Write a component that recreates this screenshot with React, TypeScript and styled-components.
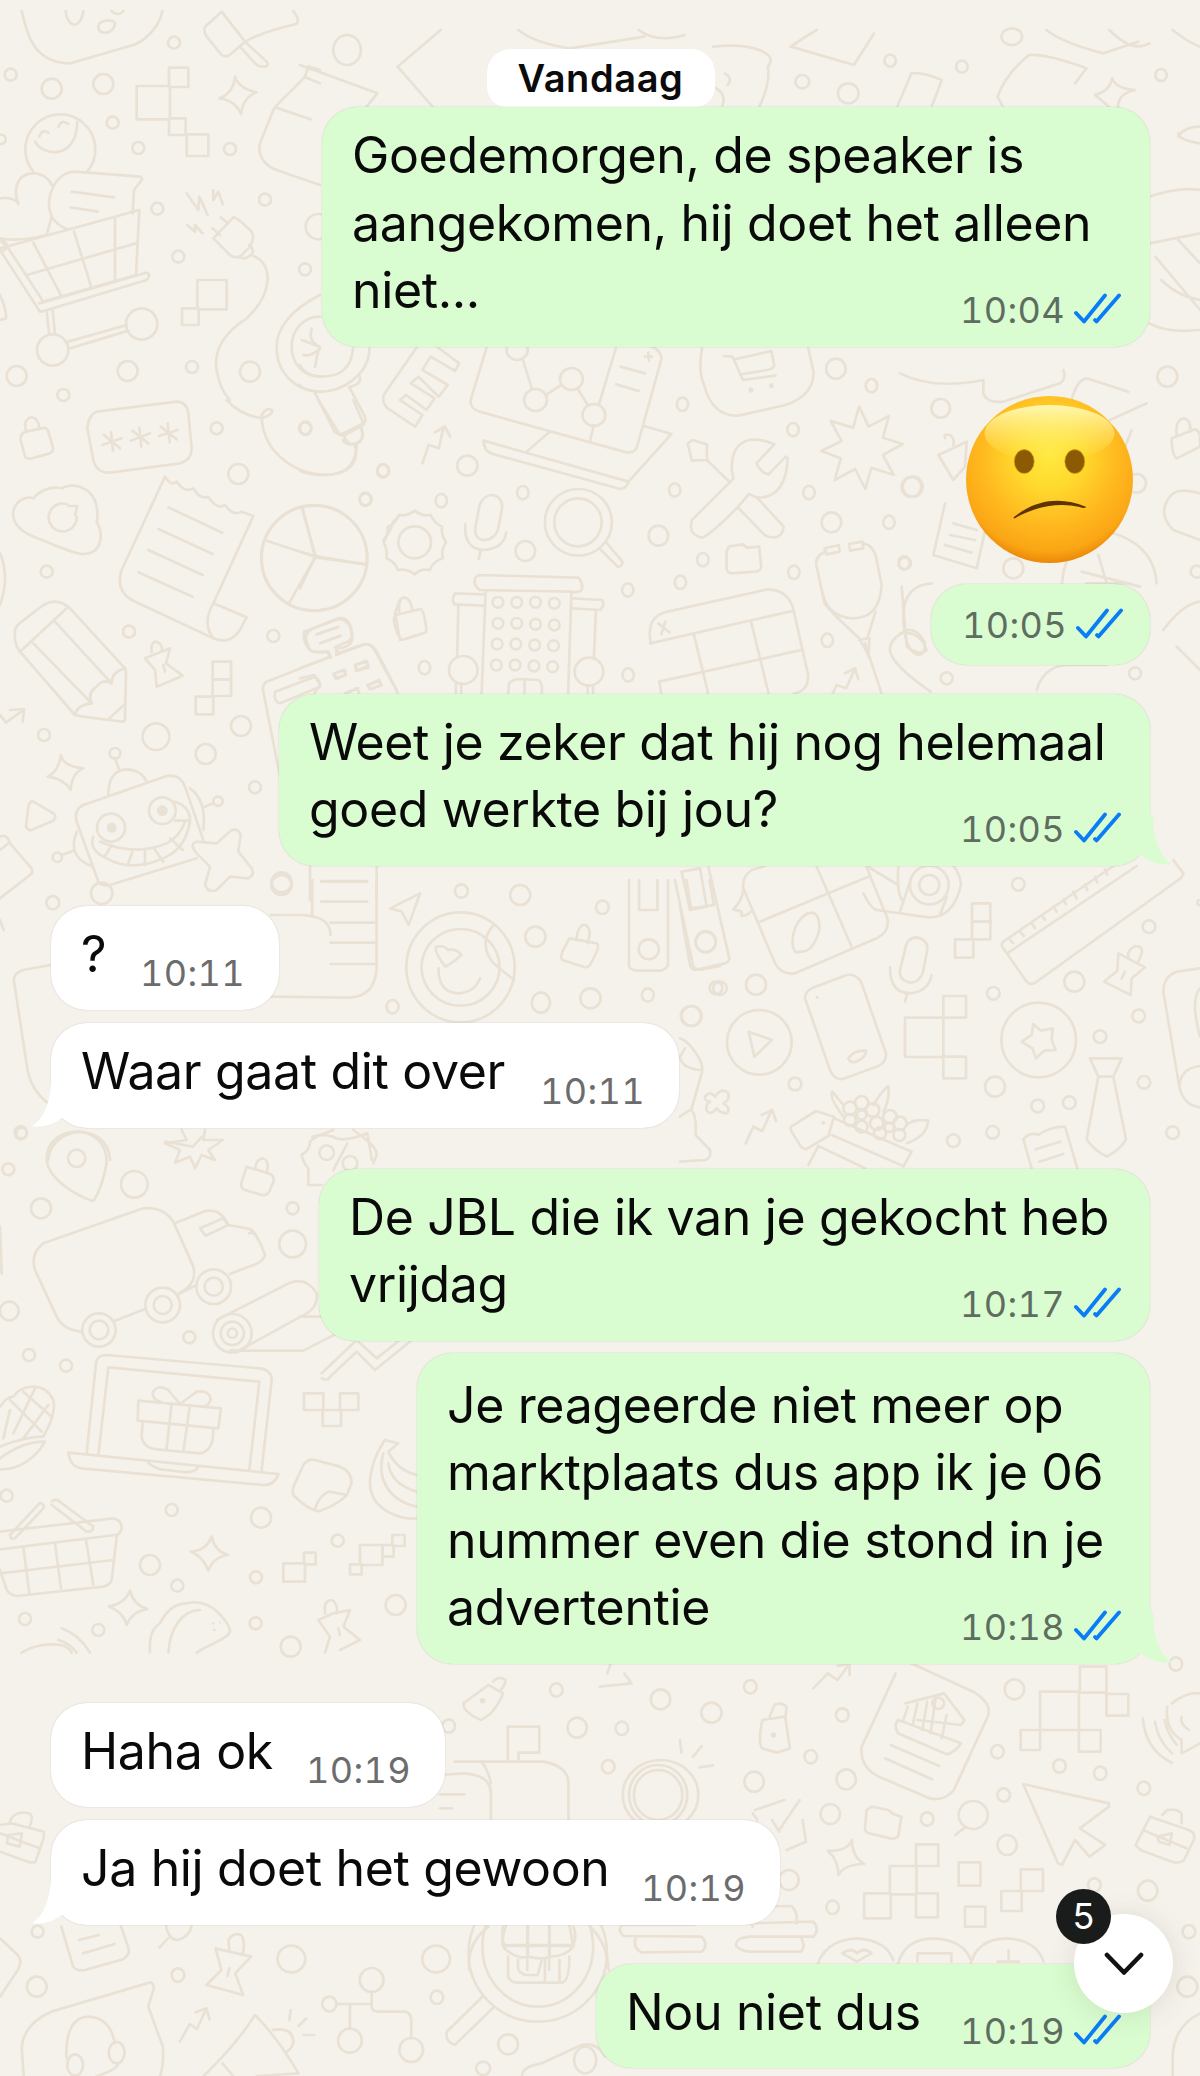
import React from "react";
import styled, { createGlobalStyle } from "styled-components";

const Global = createGlobalStyle`
  html, body { margin: 0; padding: 0; background: #f6f4ef; }
  * { box-sizing: border-box; }
`;

const Page = styled.div`
  position: relative;
  width: 1200px;
  height: 2076px;
  overflow: hidden;
  background: #f5f2ec;
  font-family: Inter, "Liberation Sans", sans-serif;
`;

const Wallpaper = styled.svg`
  position: absolute;
  inset: 0;
  width: 1200px;
  height: 2076px;
  clip-path: inset(10px 0 0 0);
`;

const Chat = styled.main`
  position: relative;
  display: flex;
  flex-direction: column;
  padding: 49px 50px 0 51px;
`;

const DateRow = styled.div`
  display: flex;
  justify-content: center;
`;

const DatePill = styled.div`
  height: 58px;
  width: 228px;
  display: flex;
  align-items: center;
  justify-content: center;
  background: #fff;
  border-radius: 24px 24px 20px 20px;
  font-size: 38px;
  font-weight: 600;
  letter-spacing: 0.6px;
  color: #0b0b0b;
`;

const Row = styled.div<{ $out: boolean; $gap: number }>`
  display: flex;
  justify-content: ${(p) => (p.$out ? "flex-end" : "flex-start")};
  margin-top: ${(p) => p.$gap}px;
`;

const Bubble = styled.div<{ $out: boolean; $w: number; $compact?: boolean; $top?: number }>`
  position: relative;
  width: ${(p) => p.$w}px;
  display: grid;
  padding: ${(p) => (p.$compact ? "0 28px 0" : `${p.$top ?? 15}px 30px 22px`)};
  height: ${(p) => (p.$compact ? "81px" : "auto")};
  align-items: ${(p) => (p.$compact ? "center" : "stretch")};
  border-radius: 36px;
  background: ${(p) => (p.$out ? "#d9fdd0" : "#ffffff")};
  box-shadow: 0 0 1.5px rgba(90, 70, 50, 0.28);
`;

const MsgText = styled.div`
  grid-area: 1 / 1;
  justify-self: start;
  font-size: 50px;
  line-height: 67.5px;
  color: #0a0a0a;
  letter-spacing: -0.35px;
`;

const MsgLine = styled.span`
  display: block;
  width: fit-content;
  white-space: nowrap;
`;

const Meta = styled.div<{ $out: boolean; $compact?: boolean }>`
  grid-area: 1 / 1;
  justify-self: end;
  align-self: ${(p) => (p.$compact ? "center" : "end")};
  display: flex;
  align-items: flex-end;
  gap: 9px;
  margin-right: ${(p) => (p.$out ? "-1px" : "4px")};
  margin-bottom: ${(p) => (p.$compact ? "-1px" : "-3px")};
  font-size: 36px;
  line-height: 36px;
  font-variant-numeric: tabular-nums;
  letter-spacing: 0.4px;
  color: ${(p) => (p.$out ? "#5f6d60" : "#6c6c6c")};
`;

const Ticks = styled.svg`
  width: 47px;
  height: 31px;
  margin-bottom: 4px;
  flex: none;
`;

const Tail = styled.svg<{ $out: boolean }>`
  position: absolute;
  bottom: 0;
  width: 60px;
  height: 60px;
  ${(p) => (p.$out ? "right: -23px;" : "left: -20px;")}
  ${(p) => (p.$out ? "" : "transform: scaleX(-1);")}
  fill: ${(p) => (p.$out ? "#d9fdd0" : "#ffffff")};
`;

const Emoji = styled.svg`
  width: 167px;
  height: 167px;
  margin-right: 17px;
`;

const ScrollButton = styled.div`
  position: absolute;
  left: 1074px;
  top: 1914px;
  width: 99px;
  height: 99px;
  border-radius: 50%;
  background: #fff;
  box-shadow: 0 2px 28px rgba(90, 80, 60, 0.14);
  display: flex;
  align-items: center;
  justify-content: center;
`;

const Chevron = styled.svg`
  width: 40px;
  height: 24px;
`;

const Badge = styled.div`
  position: absolute;
  left: -18px;
  top: -25px;
  width: 55px;
  height: 55px;
  border-radius: 50%;
  background: #191c1a;
  color: #fff;
  font-size: 36px;
  line-height: 55px;
  text-align: center;
`;

type E = [number, number, number, number?];
type R = [number, number, number, number];
interface Group {
  x: number;
  y: number;
  sx: number;
  sy: number;
  p: string[];
  c?: E[];
  r?: R[];
  f?: E[];
}

const art: Group[] = [
  {
    x: 0, y: 0, sx: 3, sy: 3,
    p: [
      "M65 33C80 100 100 190 210 190L400 135C450 115 480 70 487 33",
      "M197 33C200 80 240 95 250 33", "M295 80C295 60 340 55 345 70C345 100 295 110 295 80", "M335 33C345 45 360 45 370 33",
      "M665 35L615 80Q610 95 620 110L665 165Q680 175 695 160L735 125L665 35", "M735 125L800 185Q810 200 790 200Q775 200 765 190L720 140", "M735 125C780 100 830 85 890 72Q900 60 880 33",
      "M705 230Q715 265 770 277Q730 290 723 342Q705 300 658 295Q700 280 705 230",
      "M925 200L915 230C880 270 830 310 820 330L780 430C770 470 800 500 830 510L960 555", "M925 200L960 210", "M915 232L960 250", "M825 322L932 358",
      "M100 515A105 105 0 1 1 262 515", "M105 425C130 470 230 480 232 365", "M118 410Q125 385 145 398", "M175 382Q185 355 205 372",
      "M0 595C25 590 50 600 55 612C35 555 60 520 100 520C130 520 150 540 155 555", "M0 715C50 725 100 715 140 705",
      "M140 705L155 650C130 590 170 515 225 515L420 530Q430 535 425 540L402 570L398 640", "M215 575L342 592", "M212 622L293 635", "M155 650Q175 680 205 688",
      "M0 745L418 630L408 825", "M100 728L185 890", "M222 695L275 865", "M345 655L345 845", "M80 825L408 730", "M0 720L25 745L130 905L408 825", "M125 935L440 840Q455 825 440 818L118 910", "M0 750L120 935", "M140 935L148 1005", "M158 930L165 1005", "M205 1025L380 975", "M210 1045L385 992",
      "M560 580L595 630L598 590L623 645", "M640 570L640 600L655 575L668 612", "M562 675L585 695L585 675L608 700",
      "M640 715L700 652Q710 650 755 695Q765 715 750 740L720 770Q700 775 690 765L640 715", "M748 735Q775 760 735 775Q720 775 715 770", "M637 685L660 705", "M662 652L685 670",
      "M760 768C820 790 820 880 740 955C670 1000 640 1050 650 1110Q660 1170 690 1200",
      "M960 885C880 925 830 980 830 1040C830 1130 900 1175 960 1175", "M960 950C910 950 875 990 875 1040C875 1090 910 1130 960 1130", "M905 1020L960 1040", "M935 985Q925 1020 950 1035", "M910 1065Q935 1070 960 1045", "M945 1100L955 1050",
      "M0 885Q20 930 18 955L0 960",
    ],
    c: [[522,128,18],[32,224,18],[155,266,30],[310,252,30],[338,368,18],[415,444,18],[690,447,18],[795,599,18],[472,626,18],[535,770,18],[915,808,18],[955,680,38],[3,418,14],[50,1128,30],[383,1113,30],[576,1101,18],[750,1115,30],[190,1185,18],[158,1050,47],[425,972,47],[5,737,15]],
    r: [[507,203,58,58],[410,258,100,100],[507,355,50,50],[560,403,65,65],[592,840,88,88],[546,925,50,50]],
  },
  {
    x: 300, y: 30, sx: 1.742, sy: 3,
    p: [
      "M0 105L135 190L115 232", "M170 110L245 0", "M170 110L232 232", "M380 0Q410 40 470 55L600 20", "M590 0Q620 40 670 15",
      "M720 50Q770 40 800 60Q830 80 815 110Q820 160 800 230", "M740 130Q755 145 745 165", "M735 232Q745 190 720 170",
      "M855 50L965 105L1000 10", "M855 50Q880 20 900 0", "M1040 232L1065 130Q1085 125 1118 150L1100 232", "M1215 200Q1230 130 1270 75Q1300 70 1370 115L1350 160", "M1215 200L1225 232",
      "M1300 0Q1330 40 1400 70L1460 35", "M1410 0Q1450 70 1480 40", "M1415 145Q1420 175 1455 180Q1425 190 1425 232", "M1385 195Q1410 185 1415 145", "M1385 195Q1400 215 1410 232", "M1520 0Q1550 40 1568 50",
      "M1530 320Q1540 290 1568 290", "M1568 340Q1530 330 1530 310", "M1480 500Q1530 470 1568 480", "M1480 640L1568 610", "M1490 680L1568 840", "M1530 630L1568 700", "M1500 750Q1530 800 1568 810", "M1480 880Q1510 910 1568 900",
    ],
    c: [[82,60,24,45],[875,155,12,20],[955,190,18,30],[1028,92,10,18],[1153,110,10,18],[1500,135,10,18],[1240,20,18,25]],
  },
  {
    x: 0, y: 400, sx: 3, sy: 3,
    p: [
      "M78 95Q60 100 62 120L75 170Q80 178 95 175L150 160Q162 155 158 140L145 95Q140 80 125 85Z", "M78 95L75 70Q85 45 105 55Q118 65 118 88",
      "M290 35L530 5Q560 5 565 40L575 145Q575 180 540 190L330 218Q290 220 280 180L262 85Q265 45 290 35Z",
      "M333 97L339 153M307 135L365 115M312 105L360 145", "M418 83L424 140M392 122L450 100M397 92L445 130", "M503 70L509 127M477 108L533 90M482 80L530 118",
      "M680 0Q720 45 785 55Q825 40 815 30Q800 20 785 45Q785 120 840 170Q900 225 985 225Q1070 220 1070 130", "M955 0L1020 105L1090 70L1060 0", "M1030 100Q1040 140 1070 130Q1095 120 1085 85",
      "M100 295C130 260 170 260 185 265C215 245 280 260 290 320Q295 350 290 365C310 400 310 460 250 462Q230 465 90 405C20 370 30 310 75 295Q90 290 100 295Z", "M230 350A42 42 0 1 1 200 312", "M205 318L232 318L225 345",
      "M495 230L365 510Q345 570 395 600L640 715Q700 740 730 670L740 652L640 610Q605 670 640 715", "M495 230Q515 260 530 245Q555 280 580 265Q600 300 625 290Q650 330 675 315Q700 350 725 335L760 348L640 610", "M505 322L667 398", "M475 387L638 462", "M445 450L608 525", "M415 517L578 590",
      "M945 470L908 325", "M945 470L800 422", "M945 472L1098 493", "M945 472L870 605",
      "M45 690Q40 730 60 755L225 945Q240 950 370 965Q378 960 375 950L378 815L375 805L210 625Q170 590 130 615L65 665Q50 675 45 690", "M60 755L200 625", "M100 730L270 905", "M165 665L335 850", "M225 945Q230 915 275 910Q260 880 290 860Q310 835 335 850Q335 815 375 805", "M325 958L375 912",
      "M435 775L510 745L498 790L548 827L470 860L465 810Z", "M455 757Q450 725 470 725Q490 735 485 755", "M490 795L495 815",
      "M0 945L18 968L70 930", "M30 930L72 927L68 965",
      "M183 1065Q190 1100 250 1105Q215 1120 212 1170Q190 1135 143 1130Q175 1115 183 1065",
      "M100 1205Q90 1200 85 1220L78 1280Q85 1295 100 1288L160 1262Q172 1250 160 1240Z",
      "M250 1215L500 1128Q540 1120 555 1160L610 1320", "M250 1215Q220 1230 230 1265L295 1445Q305 1460 330 1455L590 1375", "M325 1185Q325 1110 380 1108Q425 1110 440 1145", "M345 1075L358 1110",
      "M280 1310Q265 1350 320 1375Q400 1420 500 1370Q560 1340 570 1260Q570 1220 525 1205", "M300 1325Q410 1370 500 1330Q540 1310 555 1265", "M335 1335L315 1368", "M397 1355L383 1395", "M435 1355L435 1395", "M462 1345L490 1385", "M510 1315L548 1350", "M525 1262L568 1262",
      "M230 1295Q200 1370 275 1398", "M185 1365L220 1352", "M570 1165Q620 1200 610 1290", "M610 1222L640 1210",
      "M580 1330Q575 1345 590 1360L630 1400L615 1455Q625 1480 650 1470L690 1430L745 1435Q765 1425 755 1405L715 1355L722 1305Q715 1285 695 1290L650 1330L590 1325Z",
      "M990 770L800 845Q785 855 790 875L840 1130", "M1015 655L940 685Q910 700 920 725L930 750Q940 760 980 755L993 772", "M1008 745L1010 765", "M1015 655Q1040 650 1050 675L1058 705Q1055 725 1030 730L1005 742", "M950 703L1015 680", "M960 730L1022 708", "M1008 765L1095 733Q1115 730 1130 755L1190 870",
      "M825 875L945 830Q958 835 960 860L840 910Q820 905 825 875", "M1000 822L1030 810L1038 825L1008 837Z", "M1065 795L1098 783L1105 797L1072 810Z", "M1105 855L1138 840L1145 855L1112 868Z", "M1040 880L1075 865",
      "M0 1310Q20 1300 30 1330L95 1405Q100 1420 90 1425L0 1495", "M0 1350L25 1330",
      "M930 1400L930 1500", "M1130 1400L1130 1500", "M965 1443L1100 1443", "M0 460Q30 530 0 615",
      "M1150 420Q1170 400 1180 365L1200 345", "M1200 600L1185 640L1200 720",
    ],
    c: [[650,85,18],[915,85,18],[715,222,30],[1150,212,18],[1097,298,18],[140,515,18],[387,695,18],[820,708,18],[132,1005,18],[468,1010,40],[723,978,30],[617,1062,30],[765,1162,18],[845,1447,30],[943,473,158],[345,1060,16],[333,1283,42],[487,1232,40],[172,1372,14],[654,1204,14],[305,1480,32]],
    f: [[335,1283,15],[487,1232,16]],
    r: [[638,785,55,53],[638,838,55,50],[587,890,53,53]],
  },
  {
    x: 300, y: 345, sx: 2.45, sy: 3,
    p: [
      "M170 10C170 90 100 145 40 140Q0 130 0 120", "M130 10C125 80 90 95 50 95Q10 90 0 60", "M35 140L85 260Q100 275 110 270L155 240Q165 225 155 205L120 125", "M105 285Q115 305 140 295Q160 280 150 250", "M135 300Q150 385 60 390Q20 390 0 378", "M125 125Q155 115 145 90",
      "M290 0L205 150Q200 175 215 190L282 245L300 210L245 165L260 150L310 195L330 160L272 115L290 95L340 155L362 120L300 75L320 35L380 78L390 55L330 0",
      "M300 355L315 300L340 310L352 245", "M330 262L355 245L368 275",
      "M458 5L418 165Q415 190 440 200L800 322Q825 325 828 295L886 40Q880 10 860 5", "M450 287L805 410L910 267L843 243", "M450 287Q450 320 475 328L785 432Q800 430 805 410", "M555 320L612 260", "M710 290L720 240",
      "M545 40L568 130", "M602 150L640 120", "M682 135L705 180", "M732 180L775 5", "M785 65L845 85", "M775 118L830 138", "M845 35L862 35M853 22L855 48",
      "M985 10Q975 80 990 120Q1010 215 1075 212L1190 180Q1260 150 1258 80L1245 8", "M1038 33L1060 35L1085 105L1165 92", "M1068 42L1155 18L1162 60Q1160 72 1145 75L1078 88",
      "M38 633L5 490", "M38 633L0 620", "M38 633L160 658", "M38 635L0 730",
      "M281 497Q300 515 320 510Q330 535 348 545Q345 570 358 592Q345 615 350 640Q325 650 318 675Q295 670 281 688Q262 670 240 675Q232 650 212 640Q215 615 205 592Q215 570 215 545Q235 535 242 510Q262 515 281 497Z",
      "M430 545L440 480Q450 450 470 450Q498 455 495 490L485 555Q475 585 450 585Q425 580 430 545Z", "M405 537Q400 610 450 615Q500 610 505 562", "M443 615L438 642",
      "M735 612L778 665Q790 665 790 650L750 592",
      "M950 295L962 285L997 298L997 345L960 347Z", "M997 345L1053 412", "M1053 412L960 525Q950 570 985 578Q1000 575 1070 490", "M1075 490L1140 572Q1180 590 1185 545L1120 458Q1190 460 1195 340L1190 335L1148 388Q1130 385 1118 355L1162 298Q1130 280 1100 285Q1055 300 1058 375L1062 400L1053 412", "M1070 490L1100 447L1120 458",
      "M1045 620L1050 605L1085 598L1095 608L1125 605L1130 668Q1125 680 1115 680L1055 685Q1045 680 1045 670Z",
      "M1370 185L1393 245L1443 213L1428 278L1477 297L1428 330L1455 390L1400 368L1385 432L1360 372L1310 405L1325 340L1277 318L1327 288L1300 228L1355 248Z",
      "M1290 620Q1262 630 1265 660L1285 775Q1300 800 1370 880L1395 935L1425 1045", "M1380 595Q1405 600 1412 640L1425 720Q1420 820 1355 820Q1290 815 1280 740", "M1285 610L1320 600L1322 620L1290 628Z", "M1345 597L1378 590L1380 610L1348 617Z", "M1410 800L1390 880L1370 885", "M1385 895L1393 935L1395 880",
      "M1548 715Q1480 720 1478 810Q1480 920 1515 930Q1535 925 1530 890Q1510 850 1488 855Q1445 880 1445 915Q1450 960 1545 1040",
      "M440 690L682 698Q695 715 690 735Q680 745 665 740L440 735Q425 720 428 705Q430 692 440 690", "M455 735L445 1045", "M665 740L657 1045", "M450 748L380 745Q370 760 378 778L450 782", "M668 760L740 765Q748 780 735 795L668 790", "M388 780L385 935", "M725 795L720 940", "M382 1015L382 1045M395 1015L395 1045", "M705 1020L705 1045M718 1020L718 1045", "M510 1045L512 1015Q520 1002 540 1002L585 1005Q595 1015 592 1045", "M550 1002L550 1045",
      "M235 810L295 792Q305 795 310 860Q305 865 250 885Q240 880 230 830Q230 815 235 810", "M243 800Q240 760 255 757Q272 760 275 795",
      "M10 860L95 822Q120 825 125 855L128 885Q120 910 90 910L92 925L155 898Q175 895 185 920L240 1045", "M10 860Q5 880 20 910Q30 925 70 920L75 935L0 970", "M42 868L90 848", "M50 895L98 872", "M85 985L110 975L112 990L88 1000Z", "M135 960L165 950L167 968L138 978Z", "M165 1020L195 1008L197 1022L170 1032Z", "M0 1000L35 990L50 1020L35 1045", "M110 1045L140 1030L145 1045",
      "M860 895Q845 815 900 800L1145 733Q1200 735 1210 800L1245 990Q1245 1040 1210 1045", "M858 895L1210 797", "M965 868L1000 1045", "M1105 830L1148 1045", "M880 1010L1228 915", "M885 1045L880 1010", "M878 835L905 862M895 830L885 868",
      "M1305 1045L1315 1020L1338 1030L1360 970", "M1335 985L1360 970L1368 1003",
    ],
    c: [[14,250,14,20],[203,378,14,20],[410,362,25,30],[937,178,14,20],[1208,254,14,20],[1313,71,24,30],[1400,122,14,20],[546,443,14,20],[160,463,14,20],[346,467,14,20],[918,435,14,20],[1247,443,14,20],[1498,426,24,30],[1302,532,24,30],[1443,532,14,20],[878,572,24,30],[552,618,24,30],[987,644,14,20],[1210,682,14,20],[1480,654,14,20],[803,735,14,20],[932,712,14,20],[1292,886,14,20],[305,968,14,20],[804,990,14,20],
      [532,15,26,30],[577,165,28,33],[665,102,28,33],[720,210,28,33],[35,640,130,158],[281,592,40,48],[682,532,82,100],[681,532,58,72],[400,975,35,42],[708,980,35,42],
      [485,772,13,16],[531,772,13,16],[577,772,13,16],[623,775,13,16],[485,835,13,16],[531,835,13,16],[577,838,13,16],[623,840,13,16],[483,897,13,16],[529,897,13,16],[575,900,13,16],[621,902,13,16],[481,960,13,16],[527,960,13,16],[573,963,13,16],[619,965,13,16]],
    f: [[1105,135,6,8],[1155,122,6,8]],
  },
  {
    x: 900, y: 370, sx: 3, sy: 3,
    p: [
      "M0 10Q100 60 250 30L250 70Q260 100 310 95L480 40Q500 25 490 0", "M515 90Q530 30 560 25L685 65", "M630 150L740 100", "M660 270L695 180",
      "M815 205L885 178Q900 185 900 200L900 230L830 265Q815 255 815 205", "M830 195Q825 145 855 145Q875 155 870 185",
      "M115 255L200 215L195 290L160 330Z", "M135 205Q130 190 150 195Q165 205 160 225",
      "M135 400L100 555L230 595L260 460", "M160 460L230 480", "M150 495L225 510", "M135 525L215 548",
      "M485 680Q480 520 600 480Q760 510 770 640", "M595 555L620 640", "M560 640L690 640", "M545 605L720 650",
      "M900 510L820 480Q770 430 810 380Q830 350 900 370", "M0 790Q60 780 80 840Q60 860 20 830L5 650", "M790 780Q850 700 900 695", "M830 830L900 900", "M410 960Q430 890 500 885L620 885",
    ],
    c: [[122,115,28],[802,20,30],[38,350,30],[15,580,18],[340,595,30],[140,925,18],[705,910,18],[890,605,18],[710,340,28]],
  },
  {
    x: 0, y: 880, sx: 2.178, sy: 3,
    p: [
      "M680 0L680 110", "M820 0L820 270Q815 350 760 353L590 350", "M700 5L800 5", "M700 65L800 65", "M720 128L820 128", "M720 188L820 188", "M720 252L820 252", "M590 105L660 105Q720 110 720 165",
      "M850 85L915 40L890 135L875 95Z",
      "M1075 135Q1040 190 1075 250Q1100 280 1120 300", "M970 260Q945 215 950 200Q970 195 975 210Q995 205 1005 225Q985 250 970 260", "M955 265Q955 340 1000 340Q1035 335 1045 295",
      "M1240 175L1300 190Q1305 195 1300 215L1285 255Q1280 265 1270 260L1225 240Q1220 235 1225 215Z", "M1255 180Q1260 130 1275 135Q1290 145 1280 190",
      "M1370 0L1370 260Q1375 272 1390 272L1440 272Q1455 265 1455 250L1455 0", "M1392 0L1392 90L1432 90L1432 0", "M1470 0L1510 260Q1520 275 1540 265L1568 258", "M1495 0L1505 85L1555 75L1545 0",
      "M110 255L50 270Q30 280 30 300L60 570Q70 640 115 680", "M105 840Q110 770 170 755Q235 760 240 840", "M360 785L420 800L440 770", "M680 770Q700 760 725 770Q745 790 800 760L810 840",
      "M0 120L8 150",
    ],
    c: [[115,68,14,20],[1005,33,14,20],[1133,45,22,30],[1312,82,14,20],[1166,170,22,30],[1178,368,20,30],[1286,355,22,30],[1411,345,13,20],[1505,408,22,30],[855,380,13,20],[613,15,22,30],[45,758,13,20],[1003,262,118,165],[1003,262,85,115],[1413,208,22,30],[1537,185,22,32],[1568,325,15,20]],
  },
  {
    x: 680, y: 860, sx: 3, sy: 3,
    p: [
      "M5 35L60 25L80 140L30 150Z", "M85 20L148 295Q148 305 135 310L45 330Q35 328 30 315L0 140",
      "M255 18L215 30Q185 50 190 85L285 310Q305 345 345 340L590 235Q630 215 622 175L560 22", "M240 185L565 50", "M410 20L515 260", "M345 275Q330 250 345 205Q365 160 395 158Q420 160 418 210Q400 275 365 275Q350 278 345 275", "M190 90Q185 125 160 148L185 155L185 168Q205 165 212 155",
      "M560 18L655 75", "M655 20Q650 90 665 120", "M695 50L660 155", "M550 100Q575 148 590 150L745 172Q820 175 843 75Q840 40 820 18", "M800 110L780 165",
      "M970 245L1300 18", "M1480 0L1510 40Q1510 50 1495 60L1070 365Q1055 378 1040 365L970 265Q960 250 970 245", "M985 278L1370 18", "M990 240L1000 250", "M1020 215L1032 228", "M1055 190L1065 205", "M1085 165L1095 180", "M1120 140L1130 155", "M1150 118L1158 133", "M1180 95L1190 115", "M1215 73L1222 90", "M1245 50L1252 68", "M1275 28L1282 45",
      "M675 270Q680 232 710 232Q745 240 742 270L728 340Q715 370 690 368Q655 360 660 330Z", "M630 322Q630 400 690 400Q745 395 755 345", "M682 398L675 425",
      "M375 415Q375 395 395 385L500 345Q530 340 545 370L618 580Q620 605 595 618L495 655Q465 665 450 630Z", "M505 595Q520 570 558 572Q560 590 530 605Q510 610 505 595",
      "M206 515L276 540L223 590Z",
      "M1345 292Q1340 270 1365 258Q1390 258 1385 280L1375 305", "M1315 280L1395 322L1355 355L1352 405L1272 365L1312 332Z", "M1335 335L1325 355",
      "M1060 492L1083 512L1118 505L1115 540L1127 570L1092 572L1068 595L1057 565L1025 545L1055 525Z",
      "M1230 595L1325 595L1300 650L1255 650Z", "M1255 650L1220 838Q1240 870 1280 890Q1320 870 1338 838L1300 650",
      "M197 850L220 800L247 813L275 750", "M245 765L277 750L288 783",
      "M75 710Q90 690 105 710Q125 680 145 700Q150 720 130 730Q155 745 140 760Q120 760 110 745Q90 770 80 750Q75 735 90 725Q70 720 75 710",
      "M333 800L408 753L462 770L445 828L378 868Q365 865 360 855L335 815Q330 805 333 800", "M462 775L695 875L670 920", "M455 825L670 918", "M415 858L385 915", "M415 858L555 925", "M490 770Q445 710 457 695L490 735", "M580 735Q600 700 625 678Q630 720 610 755", "M680 850Q740 830 745 782Q700 775 680 795",
      "M1030 838Q1050 815 1075 825Q1110 800 1155 800L1192 925", "M1030 838L1055 925", "M1067 868L1140 845", "M1078 905L1150 882",
      "M1560 325L1490 335Q1450 350 1450 395L1498 680Q1510 735 1560 742", "M1560 618Q1500 625 1498 680", "M1560 385Q1530 420 1560 530",
      "M0 770L30 750Q50 755 47 825L90 870Q95 895 75 900L0 905", "M0 535Q30 545 60 600Q70 620 65 640L35 745", "M15 565L0 590Q5 625 60 630",
    ],
    c: [[77,246,30],[748,75,58],[748,75,30],[238,547,97],[1076,540,112],[108,384,19],[228,374,30],[35,468,30],[345,672,19],[1015,73,19],[1407,200,19],[940,400,19],[1183,365,30],[1376,468,19],[1260,530,19],[945,680,30],[1073,738,19],[1168,728,19],[938,817,19],[820,842,19],[1392,667,19],[1478,818,19],[1560,128,8],
      [510,745,20],[545,728,20],[578,750,20],[630,770,20],[660,790,20],[510,780,18],[545,765,14],[590,790,20],[628,802,14],[658,825,18],[600,820,18],[545,800,18]],
    f: [[412,412,5],[430,788,6]],
    r: [[876,130,55,55],[876,185,55,53],[825,238,55,55],[790,408,68,65],[675,473,115,118],[790,590,68,65]],
  },
  {
    x: 0, y: 1130, sx: 3, sy: 3,
    p: [
      "M275 212C240 200 140 150 140 85C140 30 190 5 230 5C280 5 320 40 320 95C315 140 295 190 285 205Q280 215 275 212Z",
      "M495 40L560 30L545 0", "M615 0L610 30L668 30L625 60L645 90L605 75L585 115L570 80L525 98L540 60L495 40",
      "M740 110L805 130Q825 135 820 155L808 185Q800 198 785 195L735 180Q720 175 725 155Z", "M765 115Q770 85 790 85Q810 95 800 125",
      "M905 75Q930 60 930 35Q945 20 975 10L1000 0", "M1060 0Q1090 20 1110 40Q1130 55 1130 75L1120 100", "M905 75Q910 100 925 115L925 165L965 165", "M1042 40L1000 120",
      "M130 340L430 235Q490 230 520 275L580 410Q590 450 560 475L535 492", "M130 340Q90 370 105 420L170 560Q190 600 245 605", "M345 572L435 537", "M535 492L590 465",
      "M525 280L610 245Q660 230 685 285L750 297Q770 305 795 375Q790 395 760 405L690 432", "M600 295L670 265L685 285L617 317Z", "M748 310Q760 300 775 330",
      "M650 570L870 458Q920 440 950 490Q955 530 920 550L720 660", "M690 662L910 662L1060 585", "M900 560L970 560",
      "M965 730L1070 630L1130 685L1250 590", "M965 745Q985 755 990 740L1070 665L1125 720L1260 610",
      "M260 970L288 700Q290 675 320 675L780 715Q815 720 815 750L785 1020", "M295 975L325 712L778 755L748 1020", "M205 968L835 1032Q825 1065 790 1065L245 1015Q210 1010 205 968", "M445 998Q470 1020 500 1020L560 1027Q590 1025 595 1010",
      "M415 812L663 835L655 895L413 872Z", "M428 875L425 920Q430 955 470 958L600 970Q630 965 638 930L640 895", "M515 820L500 955", "M570 825L550 965", "M540 822L505 780Q470 760 458 790Q460 810 480 815", "M540 822L590 785Q630 780 632 810Q625 825 615 828",
      "M0 1018C60 1020 110 980 135 935C90 935 40 955 0 985", "M0 950C50 930 100 920 130 920Q170 850 160 810Q140 770 100 770Q60 770 40 800Q20 800 0 830", "M30 810L125 905", "M70 785L155 860", "M105 775L40 910", "M145 825L70 925", "M30 840L10 925",
      "M0 1205L340 1165Q365 1170 365 1195Q360 1215 345 1215L0 1258", "M350 1220L335 1350Q330 1365 310 1370L50 1398Q30 1395 20 1380L0 1320", "M70 1250L88 1390", "M165 1240L183 1375", "M258 1230L280 1365", "M0 1330L340 1290", "M30 1215L120 1118Q135 1125 130 1135L45 1225Q30 1230 30 1215", "M155 1115Q165 1105 175 1112L280 1190Q280 1205 260 1205L155 1125",
      "M635 1220Q645 1265 685 1275Q640 1280 625 1322Q610 1280 573 1265Q620 1260 635 1220", "M390 1382Q400 1425 442 1437Q395 1445 380 1485Q370 1445 327 1430Q375 1420 390 1382",
      "M945 990L1020 1010Q1055 1025 1055 1060L1040 1095Q1020 1120 960 1143Q930 1145 880 1095Q875 1080 885 1060L910 1005Q925 985 945 990", "M945 1138Q955 1100 985 1085Q1020 1090 1040 1095",
      "M1155 930L1195 940L1165 965", "M1155 930C1120 980 1100 1050 1115 1090C1130 1140 1200 1170 1250 1165", "M1150 970C1130 1040 1160 1110 1250 1130", "M1165 1000C1170 1040 1200 1070 1250 1085", "M1165 965Q1190 1020 1250 1035",
      "M450 1568Q445 1500 480 1480Q510 1420 560 1420Q600 1410 640 1435Q690 1480 690 1505C680 1530 620 1545 590 1568", "M505 1568C510 1490 550 1440 600 1440",
      "M955 1470L1000 1450L1050 1440L1030 1490L1080 1530L1020 1560", "M955 1470L990 1520L975 1568", "M975 1450Q970 1410 995 1410Q1015 1420 1010 1450", "M1015 1495L1020 1515",
      "M185 1495C240 1515 265 1560 270 1568", "M65 1568C110 1540 200 1530 215 1568", "M175 1530Q210 1540 230 1568", "M0 290L5 430",
    ],
    c: [[25,118,18],[123,235,30],[403,163,40],[878,235,18],[878,342,40],[28,543,28],[568,622,18],[87,675,18],[198,707,18],[515,1140,18],[783,1163,30],[20,1097,18],[450,1305,30],[768,1342,18],[532,1367,18],[1013,1232,18],[75,1467,18],[295,1500,18],[767,1480,18],[872,1550,30],[1187,1425,30],[65,10,16],
      [230,85,26],[980,68,22],[1050,100,22],[297,600,50],[297,600,28],[488,525,52],[488,525,27],[641,470,52],[641,470,27],[697,610,58],[697,610,35],[697,610,14]],
    f: [[640,1480,4],[660,1478,3],[643,1500,4]],
    r: [[912,790,58,50],[1020,790,55,50],[968,840,55,48],[850,1300,65,55],[912,1268,35,35],[1080,1245,67,60],[1147,1245,34,35],[1177,1215,37,33],[1050,1303,35,30]],
  },
  {
    x: 0, y: 1800, sx: 2.529, sy: 3,
    p: [
      "M0 75L30 70L110 95Q112 105 110 115L90 185Q80 190 70 185L0 155", "M25 65Q35 30 75 40Q85 50 75 80", "M0 100L100 145", "M20 105L55 100L50 140L18 130Z",
      "M155 380L185 500Q195 515 215 510L310 478Q330 465 325 445L305 375", "M200 420L250 405", "M210 460L290 432",
      "M420 375Q425 420 450 420Q480 410 485 375", "M425 415L403 443",
      "M545 445L635 470L595 520L615 585L522 555L560 510Z", "M580 450L578 420Q590 395 610 405Q620 420 615 458", "M580 505L575 528",
      "M0 415L40 460Q60 480 45 510L0 590",
      "M380 547L130 635Q60 670 55 745L60 828", "M380 547Q395 555 385 580L375 620L412 740Q415 790 405 828", "M168 775Q165 650 225 650Q280 655 290 730", "M300 790Q295 810 245 828",
      "M455 725L480 672L498 687L522 625", "M495 637L522 625L530 658",
      "M515 828Q600 730 645 645Q700 710 755 820L650 828", "M563 790L590 828", "M690 690Q740 680 742 725Q740 745 725 755", "M735 630L732 660", "M775 655L755 678", "M768 705L795 705",
      "M940 575L940 625Q945 635 960 635L1025 635Q1040 640 1040 660L1040 715", "M850 612L940 612", "M885 612L885 685",
      "M1220 590L1130 695Q1125 725 1150 735L1250 620",
      "M1280 375Q1265 430 1275 445Q1310 480 1335 470Q1370 480 1390 470Q1430 470 1450 440L1440 375", "M1275 435L1450 435", "M1335 375L1335 470", "M1390 375L1390 470", "M1285 470L1285 530Q1290 548 1310 548L1420 548Q1440 545 1440 470", "M1310 480L1310 505Q1315 525 1335 525L1360 525L1370 480", "M1378 480L1378 545", "M1415 480L1415 545",
      "M1320 828Q1320 800 1370 790L1470 735Q1510 725 1530 770",
    ],
    c: [[737,477,35,40],[1103,477,35,40],[450,525,16,20],[93,560,25,30],[1105,592,16,20],[1285,733,25,30],[1222,805,18,20],[95,395,15,18],[833,612,18,22],[190,795,20,32],[295,758,20,32],[940,540,30,36],[1040,750,30,36],[885,722,30,36],[1360,460,175,205],[1360,440,140,180],[1480,780,28,40]],
  },
  {
    x: 440, y: 1660, sx: 2.063, sy: 3,
    p: [
      "M48 130L100 75L130 100Q125 125 105 160L85 180Q65 170 50 145Z", "M110 65Q120 45 135 60Q135 75 125 90",
      "M665 180L712 170L722 265L695 278L665 265Q655 250 665 180", "M680 170L690 135Q705 125 715 140L713 170",
      "M770 85L800 40L820 60L843 15", "M820 18L845 12L845 45",
      "M940 40L870 260Q865 320 905 350L1010 415Q1040 425 1060 390L1130 170Q1140 130 1100 95L965 5", "M960 130L1040 100L1082 180L1075 195L985 180", "M945 180L1075 250Q1060 280 1045 283L945 220Q935 195 945 180", "M965 140L955 185", "M985 130L975 195", "M1005 125L995 210", "M1022 120L1012 220", "M1045 165L1035 235", "M930 255L1030 318", "M918 295L1015 358",
      "M1510 130Q1540 95 1568 100", "M1500 140Q1495 210 1530 240L1530 280L1568 250", "M1450 175Q1455 270 1510 308", "M1475 185Q1480 240 1510 280", "M1495 180Q1500 220 1520 255", "M1530 170Q1525 190 1545 210",
      "M140 305L140 200L205 200L205 278L162 278L162 300", "M30 305L215 305Q265 320 265 370L265 480", "M0 345L50 340Q105 345 105 400L105 480", "M0 403L50 403", "M0 445L25 445", "M85 305Q100 330 105 370",
      "M495 240L498 278", "M540 258L522 290", "M535 322L563 316",
      "M650 450L710 420", "M645 460L655 480", "M700 510L742 420", "M685 480L700 515", "M748 480L755 545L715 570",
      "M880 450L890 440L925 450L935 462L952 470L945 530L935 537L885 520Q875 515 877 500Z", "M1085 500L1063 525",
      "M1203 372L1380 430L1380 440L1320 505L1372 555L1340 590L1310 540L1283 615L1275 610Z",
      "M1465 470L1545 510Q1560 520 1555 540L1535 600Q1525 612 1510 605L1445 570L1435 555Z", "M1490 465L1500 450Q1520 445 1530 460L1530 490", "M1450 510L1540 565", "M1480 530L1510 520L1505 555L1483 545Z",
      "M850 540Q850 590 875 612Q835 612 822 645Q822 600 800 572Q840 575 850 540",
      "M375 795L525 795", "M375 795Q365 815 380 828L540 830Q555 855 540 875L415 877Q395 860 405 830", "M645 800Q640 770 670 740L725 738Q740 760 735 790", "M640 790L770 785Q785 810 770 830L640 830Q605 835 612 860Q625 875 640 875L745 875Q755 860 745 832",
      "M60 930Q55 850 100 800", "M348 930Q345 850 310 800", "M130 800Q125 840 135 860", "M275 800Q285 840 270 860", "M130 858L275 858", "M180 800L180 930", "M225 800L225 930",
      "M775 930Q790 840 860 835Q920 840 935 900", "M945 910Q960 835 1020 835Q1080 840 1095 900", "M1095 910Q1110 835 1170 835Q1230 840 1245 905", "M1173 870L1173 905", "M1150 905L1195 905", "M830 880Q850 860 860 880Q875 860 890 880L860 905Z", "M985 880L1055 880L1055 905M985 880L985 905",
      "M330 80L395 70L380 40", "M355 0L345 40",
    ],
    c: [[240,90,13,20],[455,118,20,30],[640,80,13,20],[560,158,21,30],[830,165,13,20],[283,203,20,30],[375,205,13,20],[18,198,13,20],[765,290,13,20],[347,320,13,20],[648,365,20,30],[838,358,20,30],[1185,88,20,30],[1150,275,13,20],[1278,318,13,20],[1362,340,13,20],[1163,405,13,20],[1452,385,13,20],[805,462,20,30],[1005,477,13,20],[1170,555,20,30],[720,660,20,30],[1350,675,13,20],[1460,692,20,30],[810,742,13,20],[1545,815,13,20],[1518,12,13,20],
      [455,405,78,105],[450,405,60,90],[450,405,50,75],[1028,130,12,17],[1100,465,30,42]],
    f: [[88,122,6,8],[688,225,6,8]],
    r: [[1238,95,80,115],[1320,20,55,78],[1375,102,45,65],[1198,210,40,60],[1318,210,45,65],[982,553,46,65],[928,618,55,85],[875,700,55,75],[982,700,45,72],[1070,607,45,70],[1198,628,46,65],[1158,693,42,60],[1083,740,42,60]],
  },
  {
    x: 800, y: 1850, sx: 3, sy: 3,
    p: ["M1200 490Q1120 530 1118 620L1118 678"],
    c: [[1162,410,30]],
  },
];

function Doodles() {
  return (
    <Wallpaper viewBox="0 0 1200 2076" aria-hidden="true">
      {art.map((g, i) => (
        <g key={i} transform={`translate(${g.x} ${g.y}) scale(${1 / g.sx} ${1 / g.sy})`} fill="none" stroke="#eae1d5" strokeWidth={2.7} strokeLinecap="round" strokeLinejoin="round">
          {g.p.map((d, j) => (
            <path key={j} d={d} vectorEffect="non-scaling-stroke" />
          ))}
          {(g.r || []).map(([x, y, w, h], j) => (
            <rect key={j} x={x} y={y} width={w} height={h} vectorEffect="non-scaling-stroke" />
          ))}
          {(g.c || []).map(([cx, cy, rx, ry], j) => (
            <ellipse key={j} cx={cx} cy={cy} rx={rx} ry={ry ?? rx} vectorEffect="non-scaling-stroke" />
          ))}
          {(g.f || []).map(([cx, cy, rx, ry], j) => (
            <ellipse key={j} cx={cx} cy={cy} rx={rx} ry={ry ?? rx} fill="#eae1d5" stroke="none" />
          ))}
        </g>
      ))}
    </Wallpaper>
  );
}

function DoubleTick() {
  return (
    <Ticks viewBox="0 0 47 31" fill="none" stroke="#0a7cf6" strokeWidth={3.8} strokeLinecap="round" strokeLinejoin="round">
      <path d="M2 20L10 28.5L31 2.5" />
      <path d="M21 27L22.5 28.5L45 2.5" />
    </Ticks>
  );
}

function BubbleTail({ out }: { out: boolean }) {
  return (
    <Tail $out={out} viewBox="0 0 60 60" aria-hidden="true">
      <path d="M40 8C40 32 46 50 59 58C48 60 36 56 28 49L10 49L10 8Z" />
    </Tail>
  );
}

function ConfusedFace() {
  return (
    <Emoji viewBox="198 78 502 502" aria-hidden="true">
      <defs>
        <radialGradient id="face" cx="50%" cy="36%" r="66%">
          <stop offset="0%" stopColor="#ffe93f" />
          <stop offset="30%" stopColor="#ffd92d" />
          <stop offset="62%" stopColor="#ffb91f" />
          <stop offset="86%" stopColor="#fba615" />
          <stop offset="100%" stopColor="#e67f05" />
        </radialGradient>
        <linearGradient id="shine" x1="0" y1="0" x2="0" y2="1">
          <stop offset="0%" stopColor="#fffbb8" stopOpacity="0.95" />
          <stop offset="100%" stopColor="#fff36a" stopOpacity="0" />
        </linearGradient>
      </defs>
      <circle cx="449" cy="329" r="251" fill="url(#face)" />
      <ellipse cx="449" cy="190" rx="195" ry="85" fill="url(#shine)" />
      <ellipse cx="373" cy="275" rx="30" ry="36" fill="#8c5a02" stroke="#d9a21a" strokeWidth="2" />
      <ellipse cx="525" cy="275" rx="30" ry="36" fill="#8c5a02" stroke="#d9a21a" strokeWidth="2" />
      <path d="M340 444C400 392 480 376 560 412C555 416 548 416 540 412C480 398 410 408 344 446Z" fill="#5e3502" />
    </Emoji>
  );
}

interface Msg {
  out: boolean;
  gap: number;
  w: number;
  lines: string[];
  time: string;
  tail?: boolean;
  top?: number;
}

const before: Msg = { out: true, gap: 0, w: 828, lines: ["Goedemorgen, de speaker is", "aangekomen, hij doet het alleen", "niet..."], time: "10:04" };

const after: Msg[] = [
  { out: true, gap: 29, w: 871, lines: ["Weet je zeker dat hij nog helemaal", "goed werkte bij jou?"], time: "10:05", tail: true },
  { out: false, gap: 40, w: 228, lines: ["?"], time: "10:11" },
  { out: false, gap: 13, w: 628, lines: ["Waar gaat dit over"], time: "10:11", tail: true },
  { out: true, gap: 41, w: 831, lines: ["De JBL die ik van je gekocht heb", "vrijdag"], time: "10:17" },
  { out: true, gap: 12, w: 733, lines: ["Je reageerde niet meer op", "marktplaats dus app ik je 06", "nummer even die stond in je", "advertentie"], time: "10:18", tail: true, top: 19 },
  { out: false, gap: 39, w: 394, lines: ["Haha ok"], time: "10:19" },
  { out: false, gap: 13, w: 729, lines: ["Ja hij doet het gewoon"], time: "10:19", tail: true },
  { out: true, gap: 39, w: 554, lines: ["Nou niet dus"], time: "10:19" },
];

function Message({ m }: { m: Msg }) {
  return (
    <Row $out={m.out} $gap={m.gap}>
      <Bubble $out={m.out} $w={m.w} $top={m.top}>
        {m.tail && <BubbleTail out={m.out} />}
        <MsgText>
          {m.lines.map((l, i) => (
            <MsgLine key={i}>{l}</MsgLine>
          ))}
        </MsgText>
        <Meta $out={m.out}>
          <span>{m.time}</span>
          {m.out && <DoubleTick />}
        </Meta>
      </Bubble>
    </Row>
  );
}

export default function App() {
  return (
    <Page>
      <Global />
      <Doodles />
      <Chat>
        <DateRow>
          <DatePill>Vandaag</DatePill>
        </DateRow>
        <Message m={before} />
        <Row $out $gap={49}>
          <ConfusedFace />
        </Row>
        <Row $out $gap={21}>
          <Bubble $out $w={219} $compact>
            <Meta $out $compact>
              <span>10:05</span>
              <DoubleTick />
            </Meta>
          </Bubble>
        </Row>
        {after.map((m, i) => (
          <Message key={i} m={m} />
        ))}
      </Chat>
      <ScrollButton>
        <Badge>5</Badge>
        <Chevron viewBox="0 0 40 24" fill="none" stroke="#121212" strokeWidth={4.6} strokeLinecap="round" strokeLinejoin="round">
          <path d="M3 3L20 20.5L37 3" />
        </Chevron>
      </ScrollButton>
    </Page>
  );
}
